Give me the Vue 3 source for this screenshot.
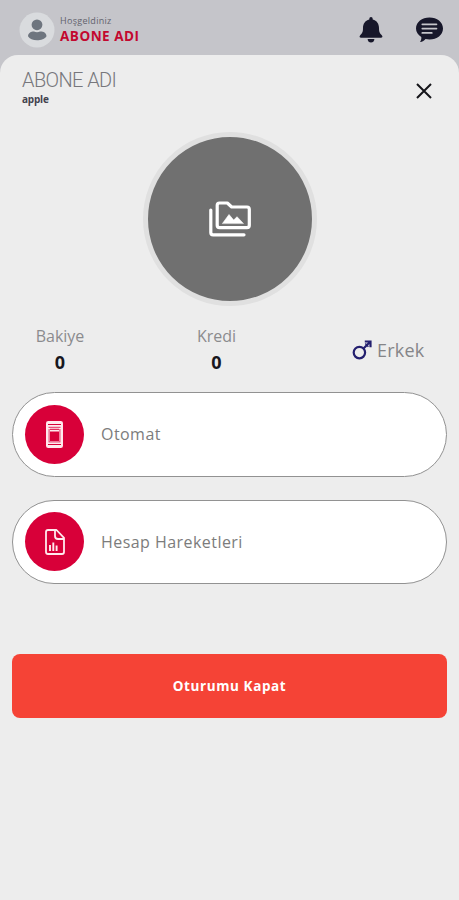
<script setup>
const stats = [
  { label: 'Bakiye', value: 0 },
  { label: 'Kredi', value: 0 },
]
const links = [
  { label: 'Otomat', icon: 'machine' },
  { label: 'Hesap Hareketleri', icon: 'report' },
]
</script>

<template>
  <div class="screen">
    <header class="topbar">
      <svg class="avatar" viewBox="0 0 36 36">
        <circle cx="18" cy="18" r="17.5" fill="#d9dbde" />
        <circle cx="18" cy="12.800" r="5.400" fill="#6e757f" />
        <path d="M9 24.2C9.2 20.5 13 19.400 15 19.600q3 1.200 6 0C24 19.400 27.300 20.600 27.500 24.200C26 27 22 28.200 18 28.200S10.500 27 9 24.200Z" fill="#6e757f" />
      </svg>
      <div class="greeting">
        <span class="hello">Hoşgeldiniz</span>
        <strong class="user">ABONE ADI</strong>
      </div>
      <svg class="bell" viewBox="0 0 24 28" fill="#17172a">
        <path d="M12 0a1.700 1.700 0 0 1 1.700 1.700v.8C18 3.500 20 7 20 11c0 4.500 1 5.400 2.800 7.200 1.200 1.200.6 2.500-.9 2.500H2.100C.6 20.700 0 19.400 1.200 18.200 3 16.400 4 15.500 4 11c0-4 2-7.500 6.300-8.500v-.8A1.700 1.700 0 0 1 12 0Z" />
        <path d="M8.600 22h6.800c-.2 2.400-1.500 3.600-3.400 3.600s-3.200-1.200-3.400-3.600Z" />
      </svg>
      <svg class="chat" viewBox="0 0 27 25">
        <path d="M13.500 0.500C21 0.500 27 5 27 11.500s-6 11-13.500 11c-1.500 0-2.800-.2-4-.5C8.500 23.500 6.500 25 4 25c1.200-1.700 1.500-3.200 1.300-5C2 18 0 15 0 11.500 0 5 6 0.500 13.500 0.500Z" fill="#17172a" />
        <path d="M6.300 7.300h14.200M6.300 11.600h14.200M6.300 15.900h9.500" stroke="#c5c5ca" stroke-width="1.700" stroke-linecap="round" />
      </svg>
    </header>

    <main class="sheet">
      <div class="sheet-head">
        <div class="identity">
          <h1>ABONE ADI</h1>
          <p>apple</p>
        </div>
        <button class="close" aria-label="Kapat">
          <svg viewBox="0 0 16 16"><path d="M1 1l14 14M15 1L1 15" stroke="#15151a" stroke-width="2" /></svg>
        </button>
      </div>

      <div class="photo">
        <svg viewBox="0 0 42 36" fill="none" stroke="#fff" stroke-width="3.200" stroke-linejoin="round" stroke-linecap="round">
          <path d="M1.800 9v22.500q0 2.300 2.300 2.300H35" />
          <path d="M10.500 2h7.800l4.400 4H38q2.300 0 2.300 2.300v16q0 2.300-2.300 2.300H10.500q-2.300 0-2.300-2.300V4.300Q8.200 2 10.500 2Z" />
          <path d="M13.600 22.300l6.400-8.800 4.700 5.600 3.300-3.400 6.200 6.600Z" fill="#fff" stroke-width=".6" />
        </svg>
      </div>

      <section class="stats">
        <div v-for="s in stats" :key="s.label" class="stat">
          <span>{{ s.label }}</span>
          <b>{{ s.value }}</b>
        </div>
        <div class="gender">
          <svg viewBox="0 0 20 20" fill="none" stroke="#24206f" stroke-width="2.200">
            <circle cx="7.400" cy="12.600" r="5.700" />
            <path d="M11.500 8.500l6.700-6.700M12.800 1.500h5.700v5.700" />
            <path d="M13.300 3.600l3.100 3.100" stroke-width="1.400" />
          </svg>
          <span>Erkek</span>
        </div>
      </section>

      <nav class="links">
        <a v-for="l in links" :key="l.label" class="link">
          <span class="badge">
            <svg v-if="l.icon === 'machine'" class="machine" viewBox="0 0 17 27">
              <rect width="17" height="27" rx="2.200" fill="#ffe9ed" />
              <path d="M2 3.500h13M2 23.500h13" stroke="#d80039" stroke-width="1" />
              <path d="M2.500 5.800h12v1.200h-12ZM2.500 8h1.200v12.300h9.600V8h1.200v13.500h-12Z" fill="#e8507a" />
              <path d="M4 10.500h9V20H4Z" fill="#d80039" />
              <path d="M4 8.300h9" stroke="#d80039" stroke-width="1" />
            </svg>
            <svg v-else class="report" viewBox="0 0 20 26" fill="none" stroke="#ffe9ed" stroke-width="1.800" stroke-linejoin="round">
              <path d="M3 1h8.500L19 8.800V23q0 2-2 2H3q-2 0-2-2V3q0-2 2-2Z" />
              <path d="M10 1v6q0 3 3 3h6" />
              <path d="M5 22v-6M8.300 22v-8.500M11.600 22v-5.500" stroke-width="1.900" />
            </svg>
          </span>
          <span class="link-label">{{ l.label }}</span>
        </a>
      </nav>

      <button class="logout">Oturumu Kapat</button>
    </main>
  </div>
</template>

<style>
body {
  margin: 0;
  background: #c5c5ca;
}
</style>

<style scoped>
.screen {
  height: 900px;
  display: flex;
  flex-direction: column;
  overflow: hidden;
  background: #c5c5ca;
  font-family: "Open Sans", "Noto Sans", sans-serif;
}
svg {
  display: block;
  flex: none;
}
button {
  border: 0;
  padding: 0;
  font-family: inherit;
}
.topbar {
  height: 55px;
  flex: none;
  display: flex;
  align-items: flex-start;
  padding: 0 16px 0 19px;
  box-sizing: border-box;
}
.avatar {
  width: 36px;
  height: 36px;
  margin-top: 12px;
}
.greeting {
  display: flex;
  flex-direction: column;
  margin: 14px auto 0 5px;
}
.hello {
  font-size: 9px;
  line-height: 13px;
  letter-spacing: 0.3px;
  color: #62626c;
}
.user {
  font-size: 13.5px;
  line-height: 19px;
  font-weight: 700;
  letter-spacing: 0.5px;
  color: #c3082f;
}
.bell {
  width: 24px;
  height: 28px;
  margin-top: 17px;
}
.chat {
  width: 27px;
  height: 25px;
  margin: 17px 0 0 33px;
}
.sheet {
  flex: 1;
  background: #ededed;
  border-radius: 18px 18px 0 0;
  padding: 0 12px;
  display: flex;
  flex-direction: column;
}
.sheet-head {
  height: 77px;
  display: flex;
  justify-content: space-between;
  padding: 0 15px 0 10px;
}
.identity {
  padding-top: 14px;
}
h1 {
  margin: 0;
  font: 300 20px/23px Roboto, sans-serif;
  letter-spacing: -0.6px;
  color: #77777c;
}
p {
  margin: 0;
  font-size: 10px;
  line-height: 14px;
  font-weight: 700;
  letter-spacing: -0.2px;
  color: #42424e;
}
.close {
  width: 16px;
  height: 16px;
  margin-top: 28px;
  background: none;
}
.photo {
  width: 164px;
  height: 164px;
  align-self: center;
  border: 5px solid #e0e0e0;
  border-radius: 50%;
  background: #707070;
  display: flex;
  align-items: center;
  justify-content: center;
}
.photo svg {
  width: 42px;
  height: 36px;
}
.stats {
  height: 86px;
  display: grid;
  grid-template-columns: 96px 217px 1fr;
  align-items: start;
}
.stat {
  display: flex;
  flex-direction: column;
  align-items: center;
  padding-top: 16px;
}
.stat span {
  font-size: 16px;
  line-height: 28px;
  color: #8b8b8e;
}
.stat b {
  font-size: 18px;
  line-height: 25px;
  color: #17171e;
}
.gender {
  display: flex;
  align-items: center;
  gap: 5px;
  margin: 31px 0 0 27px;
}
.gender svg {
  width: 20px;
  height: 20px;
  margin-bottom: 1px;
}
.gender span {
  font-size: 18px;
  line-height: 26px;
  letter-spacing: 0.2px;
  color: #858588;
}
.links {
  display: flex;
  flex-direction: column;
  gap: 23px;
}
.link {
  height: 84.5px;
  box-sizing: border-box;
  border: 1px solid #929292;
  border-radius: 43px;
  background: #fff;
  display: flex;
  align-items: center;
  padding-left: 12px;
}
.badge {
  width: 59px;
  height: 59px;
  border-radius: 50%;
  background: #d80039;
  display: flex;
  align-items: center;
  justify-content: center;
}
.machine {
  width: 17px;
  height: 27px;
}
.report {
  width: 20px;
  height: 26px;
}
.link-label {
  margin-left: 17px;
  font-size: 16px;
  letter-spacing: 0.45px;
  color: #7c7c7c;
}
.logout {
  height: 64px;
  margin-top: 70px;
  border-radius: 8px;
  background: #f54336;
  color: #fff;
  font-size: 13.5px;
  font-weight: 700;
  letter-spacing: 0.6px;
}
</style>
